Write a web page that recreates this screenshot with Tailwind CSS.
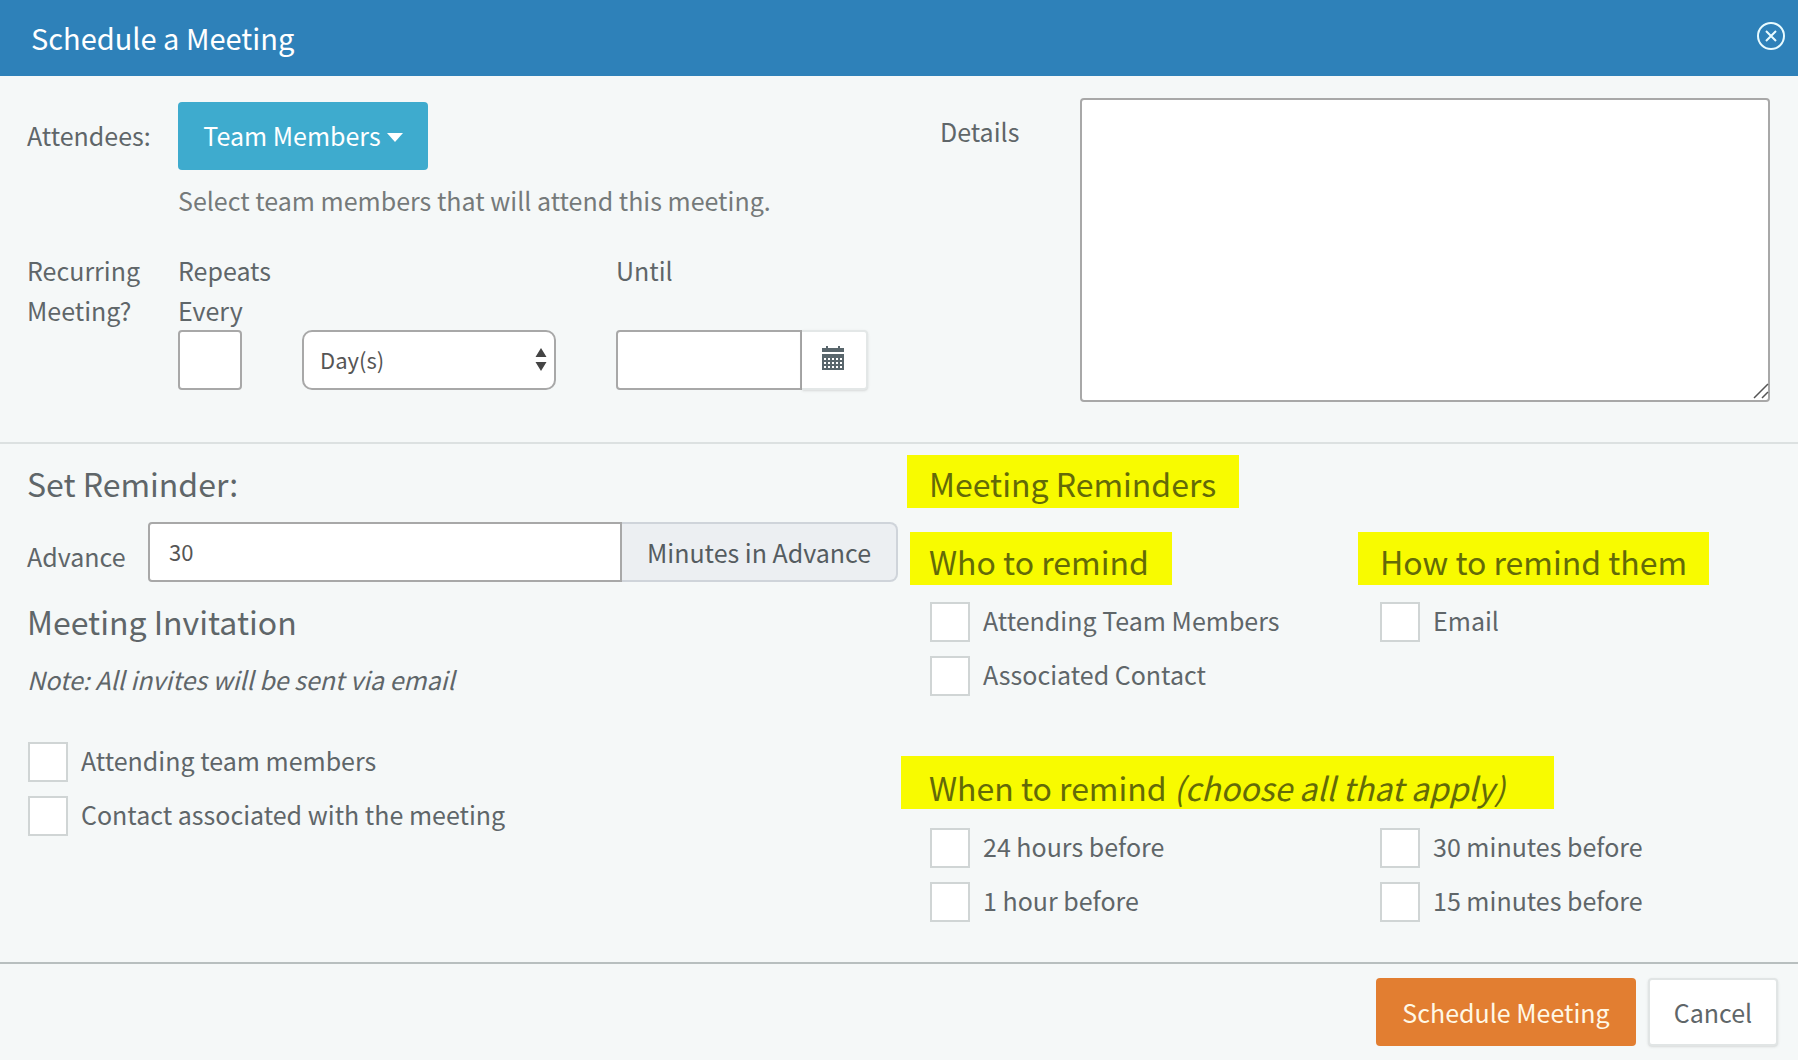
<!DOCTYPE html>
<html lang="en">
<head>
<meta charset="utf-8">
<meta name="viewport" content="width=device-width, initial-scale=1">
<title>Schedule a Meeting</title>
<script src="https://cdn.jsdelivr.net/npm/@tailwindcss/browser@4"></script>
</head>
<body class="bg-[#f5f8f8] font-['Noto_Sans_CJK_SC','Open_Sans',sans-serif] text-[25px] leading-10 text-[#5f6669]">
<form class="flex min-h-screen flex-col">
  <header class="flex h-[76px] items-center justify-between bg-[#2e81b9] pr-[11px] pl-[31px] text-white">
    <h1 class="pb-[2px] text-[29px]">Schedule a Meeting</h1>
    <button type="button" aria-label="Close" class="mb-1 size-8">
      <svg viewBox="0 0 32 32" class="size-8" fill="none" stroke="#e8fbff" stroke-width="2"><circle cx="16" cy="16" r="13"/><path d="M11 11l10 10M21 11l-10 10"/></svg>
    </button>
  </header>

  <section class="grid h-[368px] grid-cols-2 border-b-2 border-[#dce1e1]">
    <div class="pt-[26px] pl-[27px]">
      <div class="flex items-start">
        <span class="w-[151px] shrink-0 pt-[13px]" id="attendees">Attendees:</span>
        <div>
          <button type="button" aria-describedby="attendees" class="flex h-[68px] w-[250px] items-center justify-center gap-[6px] rounded bg-[#3eabce] pb-[2px] text-white">Team Members
            <svg viewBox="0 0 16 10" class="mt-[6px] h-[10px] w-4" fill="#fff"><path d="M0 0h16L8 9z"/></svg>
          </button>
          <p class="mt-[10px] text-[#757a7a]">Select team members that will attend this meeting.</p>
        </div>
      </div>
      <div class="mt-[30px] flex items-start">
        <span class="w-[151px] shrink-0 pr-6">Recurring Meeting?</span>
        <div class="flex w-[438px] shrink-0 flex-col">
          <label for="every" class="w-[110px]">Repeats Every</label>
          <div class="flex">
            <input id="every" type="text" class="mr-[60px] h-[60px] w-16 rounded border-2 border-[#a8a8a8] bg-white px-3 text-[22px]">
            <div class="relative w-[254px]">
              <select aria-label="Repeat unit" class="h-[60px] w-full appearance-none rounded-[10px] border-2 border-[#a8a8a8] bg-white px-4 pb-[2px] text-[22px] text-[#555]"><option>Day(s)</option></select>
              <svg viewBox="0 0 12 26" class="pointer-events-none absolute top-[17px] right-[9px] h-[26px] w-3" fill="#444"><path d="M0.500 10L6 1l5.500 9zM0.500 15h11L6 24z"/></svg>
            </div>
          </div>
        </div>
        <div>
          <label for="until" class="mb-10 block">Until</label>
          <div class="flex">
            <input id="until" type="text" class="h-[60px] w-[186px] rounded-l border-2 border-[#a8a8a8] bg-white px-4 text-[22px]">
            <button type="button" aria-label="Pick a date" class="flex h-[60px] w-[66px] items-center justify-center rounded-r border-2 border-l-0 border-[#e3e7e7] bg-white pr-[2px] pb-1 shadow-sm">
              <svg viewBox="0 0 22 24" class="h-6 w-[22px]"><path fill="#59666c" d="M0 2h4V0h2v2h10V0h2v2h4v4H0zM0 8h22v16H0z"/><path fill="#fff" d="M2 12h2v2H2zm4 0h2v2H6zm4 0h2v2h-2zm4 0h2v2h-2zm4 0h2v2h-2zM2 16h2v2H2zm4 0h2v2H6zm4 0h2v2h-2zm4 0h2v2h-2zm4 0h2v2h-2zM2 20h2v2H2zm4 0h2v2H6zm4 0h2v2h-2zm4 0h2v2h-2zm4 0h2v2h-2z"/></svg>
            </button>
          </div>
        </div>
      </div>
    </div>
    <div class="flex items-start pt-[22px] pr-7 pl-[41px]">
      <label for="details" class="w-[140px] shrink-0 pt-[13px]">Details</label>
      <div class="relative flex-1">
        <textarea id="details" class="block h-[304px] w-full resize-none rounded border-2 border-[#a8a8a8] bg-white p-4 text-[22px]"></textarea>
        <svg viewBox="0 0 16 16" class="pointer-events-none absolute right-px bottom-[3px] size-4" fill="none" stroke="#555" stroke-width="1.5"><path d="M1 15L15 1M9 15l6-6"/></svg>
      </div>
    </div>
  </section>

  <section class="grid flex-1 grid-cols-2">
    <div class="pt-[19px] pr-px pl-[27px]">
      <h2 class="text-[32px]">Set Reminder:</h2>
      <div class="mt-[19px] flex items-center">
        <label for="advance" class="w-[121px] shrink-0 pt-2">Advance</label>
        <input id="advance" type="text" value="30" class="h-[60px] min-w-0 flex-1 rounded-l border-2 border-[#a8a8a8] bg-white px-[19px] pb-[2px] text-[22px] text-[#555]">
        <span class="flex h-[60px] w-[276px] items-center justify-center rounded-r-lg border-2 border-l-0 border-[#cfd4da] bg-[#eceff2] text-[#555c60]">Minutes in Advance</span>
      </div>
      <h2 class="mt-[19px] text-[32px]">Meeting Invitation</h2>
      <p class="mt-[18px] italic">Note: All invites will be sent via email</p>
      <div class="mt-[43px] flex flex-col gap-[14px] pl-px">
        <label class="flex h-10 gap-[13px] leading-9"><input type="checkbox" class="size-10 appearance-none border-2 border-[#d0d5d5] bg-white">Attending team members</label>
        <label class="flex h-10 gap-[13px] leading-9"><input type="checkbox" class="size-10 appearance-none border-2 border-[#d0d5d5] bg-white">Contact associated with the meeting</label>
      </div>
    </div>
    <div class="pt-[11px] pl-[31px]">
      <h2 class="-ml-[23px] flex h-[53px] w-[332px] items-center bg-[#f8fb00] pt-[2px] pl-[22px] text-[32px] whitespace-nowrap text-[#636a08]">Meeting Reminders</h2>
      <div class="mt-6 grid grid-cols-2">
        <div>
          <h3 class="-ml-5 flex h-[53px] w-[262px] items-center bg-[#f8fb00] pt-1 pl-[19px] text-[32px] whitespace-nowrap text-[#636a08]">Who to remind</h3>
          <div class="mt-[17px] flex flex-col gap-[14px]">
            <label class="flex h-10 gap-[13px] leading-9"><input type="checkbox" class="size-10 appearance-none border-2 border-[#d0d5d5] bg-white">Attending Team Members</label>
            <label class="flex h-10 gap-[13px] leading-9"><input type="checkbox" class="size-10 appearance-none border-2 border-[#d0d5d5] bg-white">Associated Contact</label>
          </div>
        </div>
        <div class="pl-4">
          <h3 class="-ml-[22px] flex h-[53px] w-[351px] items-center bg-[#f8fb00] pt-1 pl-[22px] text-[32px] whitespace-nowrap text-[#636a08]">How to remind them</h3>
          <div class="mt-[17px]">
            <label class="flex h-10 gap-[13px] leading-9"><input type="checkbox" class="size-10 appearance-none border-2 border-[#d0d5d5] bg-white">Email</label>
          </div>
        </div>
      </div>
      <h3 class="mt-[60px] -ml-[29px] flex h-[53px] w-[653px] items-center bg-[#f8fb00] pt-2 pl-7 text-[32px] whitespace-pre text-[#636a08]">When to remind <em>(choose all that apply)</em></h3>
      <div class="mt-[19px] grid grid-cols-2 gap-y-[14px]">
        <label class="flex h-10 gap-[13px] leading-9"><input type="checkbox" class="size-10 appearance-none border-2 border-[#d0d5d5] bg-white">24 hours before</label>
        <label class="flex h-10 gap-[13px] pl-4 leading-9"><input type="checkbox" class="size-10 appearance-none border-2 border-[#d0d5d5] bg-white">30 minutes before</label>
        <label class="flex h-10 gap-[13px] leading-9"><input type="checkbox" class="size-10 appearance-none border-2 border-[#d0d5d5] bg-white">1 hour before</label>
        <label class="flex h-10 gap-[13px] pl-4 leading-9"><input type="checkbox" class="size-10 appearance-none border-2 border-[#d0d5d5] bg-white">15 minutes before</label>
      </div>
    </div>
  </section>

  <footer class="flex h-[98px] items-start justify-end gap-3 border-t-2 border-[#b8bfbf] pt-[14px] pr-5">
    <button type="submit" class="h-[68px] w-[260px] rounded bg-[#e27e31] text-[#fff8e6]">Schedule Meeting</button>
    <button type="button" class="h-[68px] w-[130px] rounded border-2 border-[#e1e5e5] bg-white shadow-sm">Cancel</button>
  </footer>
</form>
</body>
</html>
